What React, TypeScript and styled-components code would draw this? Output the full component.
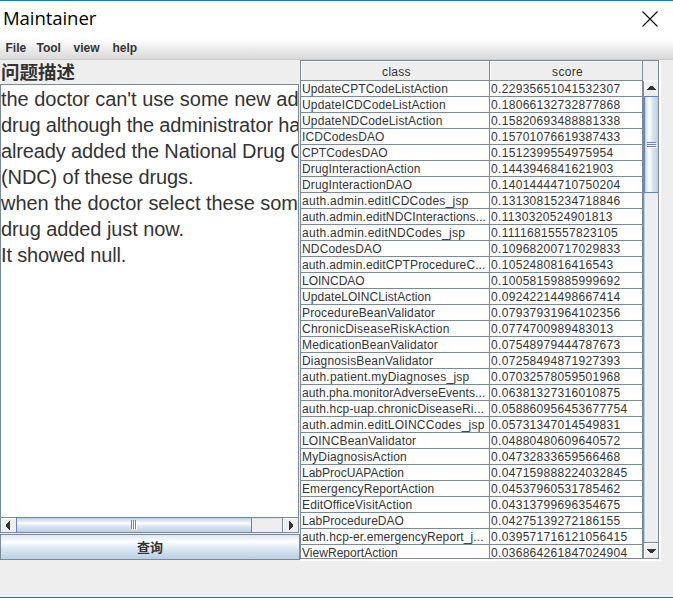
import React from "react";
import styled, { createGlobalStyle } from "styled-components";

const Global = createGlobalStyle`
  * { box-sizing: border-box; }
  body { margin: 0; background: #eee; overflow: hidden; }
`;
const line = "#7a8a99";
const Window = styled.div`
  width: 673px; height: 598px; display: flex; flex-direction: column;
  background: #eee; border-top: 1px solid #1879cc; border-bottom: 1px solid #1879cc;
  color: #333; font-family: "Liberation Sans", "Noto Sans CJK SC", sans-serif; overflow: hidden;
`;
const TitleBar = styled.header`
  height: 37px; flex: none; background: #fff; display: flex; justify-content: space-between;
  padding: 0 15px 0 3px;
`;
const Title = styled.span`
  font: 18.6px/34px "Open Sans", sans-serif; color: #000; letter-spacing: -0.1px;
`;
const CloseIcon = styled.svg`display: block; margin-top: 10px;`;
const MenuBar = styled.nav`
  height: 22px; flex: none; display: flex; gap: 12px; padding-left: 5.5px;
  background: linear-gradient(#fff, #dadada); border-bottom: 1px solid #ccc;
`;
const Menu = styled.span<{ $w: number }>`
  width: ${(p) => p.$w}px; font-size: 12px; font-weight: bold; line-height: 20px; white-space: nowrap;
`;
const Content = styled.main`display: flex; height: 501px; flex: none;`;
const Left = styled.section`width: 300px; display: flex; flex-direction: column;`;
const Label = styled.label`
  height: 24px; flex: none; padding-left: 1px; white-space: nowrap;
  font: bold 18.5px/23px "Noto Sans CJK SC", sans-serif;
`;
const TextPane = styled.div`
  width: 299px; height: 449px; flex: none; display: flex; flex-direction: column;
  border: 1px solid ${line}; background: #fff;
`;
const TextBody = styled.div`
  height: 433px; flex: none; overflow: hidden; font-size: 20px; line-height: 26px; padding-top: 1px;
`;
const TextLine = styled.div<{ $s: number }>`white-space: nowrap; letter-spacing: ${(p) => p.$s}px;`;
const HScroll = styled.div`
  height: 14px; flex: none; display: flex; background: #eee; box-shadow: 0 -1px ${line};
`;
const HThumb = styled.div`
  width: 236px; height: 15px; flex: none; display: flex; align-items: center; justify-content: center;
  border: 1px solid #6382bf; border-bottom: 0; position: relative;
  margin-top: -1px; background: linear-gradient(#b8cfe5, #dde8f3 20%, #fff 38%, #dde8f3 55%, #b8cfe5);
`;
const HTrack = styled.div`flex: 1; border-top: 1px solid #ddd;`;
const ArrowBox = styled.div<{ $edge?: string; $short: boolean }>`
  width: ${(p) => (p.$edge === "left" ? 16 : p.$edge ? 14 : 15)}px;
  height: ${(p) => (p.$short ? 14 : p.$edge === "top" ? 16 : 15)}px;
  flex: none; background: #eee; box-shadow: inset 1px 1px #fff; overflow: hidden;
  ${(p) => p.$edge === "left" && `border-left: 1px solid ${line};`}
  ${(p) => p.$edge === "top" && `border-top: 1px solid ${line};`}
`;
const Glyph = styled.svg`display: block;`;
const Query = styled.button`
  margin-top: 1px; width: 300px; height: 26px; flex: none; padding: 0 0 1px;
  border: 1px solid ${line}; color: #333;
  background: linear-gradient(#dde8f3, #fff 30%, #dde8f3 55%, #b8cfe5);
  font: bold 13px/22px "Noto Sans CJK SC", sans-serif;
`;
const Right = styled.section`
  width: 361px; height: 501px; border-right: 2px solid #fff; border-bottom: 2px solid #fff;
`;
const TablePane = styled.div`
  width: 359px; height: 499px; display: flex; border: 1px solid ${line}; overflow: hidden;
`;
const Table = styled.div`width: 342px; flex: none; display: grid; grid-template-columns: 189px 153px; align-content: start;`;
const Head = styled.div`
  height: 20px; background: #eee; border-right: 1px solid ${line}; border-bottom: 1px solid ${line};
  box-shadow: inset 1px 1px #fff; font-size: 12px; line-height: 22px; text-align: center;
  letter-spacing: 0.3px; padding-left: 3px;
`;
const Cell = styled.div<{ $s: number }>`
  height: 16px; background: #fff; border-right: 1px solid ${line}; border-bottom: 1px solid ${line};
  font-size: 12px; line-height: 16px; padding-left: 1px; white-space: nowrap;
  letter-spacing: ${(p) => p.$s}px;
`;
const Side = styled.div`width: 15px; flex: none; display: flex; flex-direction: column; background: #eee;`;
const Corner = styled.div`height: 20px; flex: none;`;
const VScroll = styled.div`
  flex: 1; display: flex; flex-direction: column; border-left: 1px solid ${line}; box-shadow: 0 -1px #fff;
`;
const VThumb = styled.div`
  height: 97px; flex: none; display: flex; align-items: center; justify-content: center;
  border: 1px solid #6382bf; border-right: 0;
  background: linear-gradient(90deg, #b8cfe5, #dde8f3 12%, #fff 32%, #dde8f3 55%, #b8cfe5);
`;
const VTrack = styled.div`flex: 1; border-left: 1px solid #b8cfe5;`;

const arrows = {
  left: "M9 3v9h-1v-1h-1v-1h-1v-1h-1v-3h1v-1h1v-1h1v-1z",
  right: "M6 3v9h1v-1h1v-1h1v-1h1v-3h-1v-1h-1v-1h-1v-1z",
  up: "M3 9h9v-1h-1v-1h-1v-1h-1v-1h-3v1h-1v1h-1v1h-1z",
  down: "M3 6h9v1h-1v1h-1v1h-1v1h-3v-1h-1v-1h-1v-1h-1z",
};
const Arrow = ({ dir, edge }: { dir: keyof typeof arrows; edge?: string }) => (
  <ArrowBox $edge={edge} $short={dir === "left" || dir === "right"}>
    <Glyph width="15" height="15" shapeRendering="crispEdges"><path d={arrows[dir]} fill="#333" /></Glyph>
  </ArrowBox>
);

const message: [string, number][] = [
  ["the doctor can't use some new ad", -0.03],
  ["drug although the administrator ha", -0.16],
  ["already added the National Drug C", -0.13],
  ["(NDC) of these drugs.", -0.1],
  ["when the doctor select these som", -0.03],
  ["drug added just now.", -0.08],
  ["It showed null.", -0.18],
];
const rows: [string, string, number][] = [
  ["UpdateCPTCodeListAction", "0.22935651041532307", 0.11],
  ["UpdateICDCodeListAction", "0.18066132732877868", 0.16],
  ["UpdateNDCodeListAction", "0.15820693488881338", 0.17],
  ["ICDCodesDAO", "0.15701076619387433", 0.1],
  ["CPTCodesDAO", "0.1512399554975954", 0.1],
  ["DrugInteractionAction", "0.1443946841621903", 0.15],
  ["DrugInteractionDAO", "0.14014444710750204", 0.12],
  ["auth.admin.editICDCodes_jsp", "0.13130815234718846", 0.27],
  ["auth.admin.editNDCInteractions...", "0.1130320524901813", 0.12],
  ["auth.admin.editNDCodes_jsp", "0.11116815557823105", 0.27],
  ["NDCodesDAO", "0.10968200717029833", 0.16],
  ["auth.admin.editCPTProcedureC...", "0.1052480816416543", 0.11],
  ["LOINCDAO", "0.10058159885999692", 0],
  ["UpdateLOINCListAction", "0.09242214498667414", 0.08],
  ["ProcedureBeanValidator", "0.07937931964102356", 0.15],
  ["ChronicDiseaseRiskAction", "0.0774700989483013", 0.26],
  ["MedicationBeanValidator", "0.07548979444787673", 0.15],
  ["DiagnosisBeanValidator", "0.07258494871927393", 0.18],
  ["auth.patient.myDiagnoses_jsp", "0.07032578059501968", 0.24],
  ["auth.pha.monitorAdverseEvents...", "0.06381327316010875", 0.08],
  ["auth.hcp-uap.chronicDiseaseRi...", "0.058860956453677754", 0.17],
  ["auth.admin.editLOINCCodes_jsp", "0.05731347014549831", 0.25],
  ["LOINCBeanValidator", "0.04880480609640572", 0.17],
  ["MyDiagnosisAction", "0.04732833659566468", 0.17],
  ["LabProcUAPAction", "0.047159888224032845", 0],
  ["EmergencyReportAction", "0.04537960531785462", 0.11],
  ["EditOfficeVisitAction", "0.04313799696354675", 0.13],
  ["LabProcedureDAO", "0.04275139272186155", 0.04],
  ["auth.hcp-er.emergencyReport_j...", "0.039571716121056415", 0.11],
  ["ViewReportAction", "0.036864261847024904", 0.04],
];

export default function App() {
  return (
    <>
      <Global />
      <Window>
        <TitleBar>
          <Title>Maintainer</Title>
          <CloseIcon width="16" height="16"><path d="M.5.5l15 15M15.5.5l-15 15" stroke="#000" strokeWidth="1.1" /></CloseIcon>
        </TitleBar>
        <MenuBar>
          <Menu $w={19}>File</Menu><Menu $w={25}>Tool</Menu><Menu $w={27}>view</Menu><Menu $w={25}>help</Menu>
        </MenuBar>
        <Content>
          <Left>
            <Label>问题描述</Label>
            <TextPane>
              <TextBody>{message.map(([t, s]) => <TextLine key={t} $s={s}>{t}</TextLine>)}</TextBody>
              <HScroll>
                <Arrow dir="left" />
                <HThumb>
                  <svg width="6" height="10" shapeRendering="crispEdges">
                    <path d="M1.5 1v9M3.5 1v9M5.5 1v9" stroke="#fff" /><path d="M.5 0v9M2.5 0v9M4.5 0v9" stroke="#6382bf" />
                  </svg>
                </HThumb>
                <HTrack />
                <Arrow dir="right" edge="left" />
              </HScroll>
            </TextPane>
            <Query>查询</Query>
          </Left>
          <Right>
            <TablePane>
              <Table>
                <Head>class</Head><Head>score</Head>
                {rows.map(([name, score, s]) => (
                  <React.Fragment key={name}><Cell $s={s}>{name}</Cell><Cell $s={0.32}>{score}</Cell></React.Fragment>
                ))}
              </Table>
              <Side>
                <Corner />
                <VScroll>
                  <Arrow dir="up" />
                  <VThumb>
                    <svg width="10" height="6" shapeRendering="crispEdges">
                      <path d="M1 1.5h9M1 3.5h9M1 5.5h9" stroke="#fff" /><path d="M0 .5h9M0 2.5h9M0 4.5h9" stroke="#6382bf" />
                    </svg>
                  </VThumb>
                  <VTrack />
                  <Arrow dir="down" edge="top" />
                </VScroll>
              </Side>
            </TablePane>
          </Right>
        </Content>
      </Window>
    </>
  );
}
